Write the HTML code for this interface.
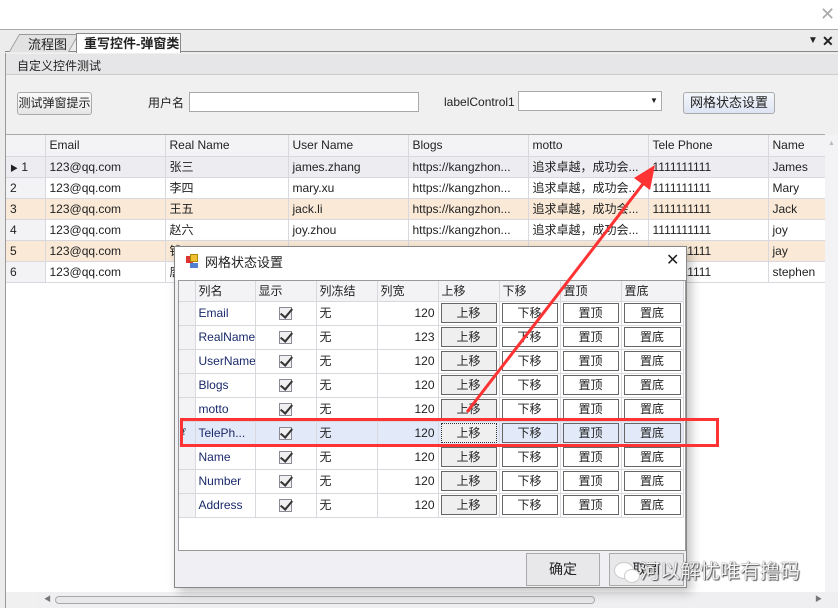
<!DOCTYPE html>
<html><head><meta charset="utf-8"><style>
*{margin:0;padding:0;box-sizing:border-box}
body{width:838px;height:608px;position:relative;overflow:hidden;background:#fff;font-family:"Liberation Sans","Noto Sans CJK SC",sans-serif;font-size:12px;color:#222}
.a{position:absolute}
.t{position:absolute;white-space:nowrap;line-height:1}
.btn{position:absolute;border:1px solid #aaa;border-radius:3px;background:linear-gradient(#fafafa,#e6e6e6);text-align:center;font-size:12px}
.g td{border-right:1px solid #d8d8de;border-bottom:1px solid #d8d8de;height:21px;padding:0 4px;white-space:nowrap;overflow:hidden;font-size:12px;color:#222}
.g{border-collapse:collapse;table-layout:fixed;position:absolute}
.d td{border-right:1px solid #d8d8de;border-bottom:1px solid #d8d8de;height:24px;padding:0 3px;white-space:nowrap;overflow:hidden;font-size:12px;line-height:14px}
.d tr.h td{height:20px;padding-top:0;padding-bottom:0}
.d{border-collapse:collapse;table-layout:fixed;position:absolute}
.cb{display:inline-block;width:13px;height:13px;border:1px solid #8a8a95;background:#f0f0f0;position:relative;vertical-align:middle}
.cb:after{content:"";position:absolute;left:3px;top:-2px;width:5px;height:10px;border:solid #333;border-width:0 2px 2px 0;transform:rotate(40deg)}
.b{display:block;border:1px solid #666;height:20px;line-height:18px;text-align:center;background:#fff;margin:0 -1px}
.b1{background:#efefef}
.sel td{background:#e2eaf9}
.sel .b{background:#e2eaf9}
.sel .b1{background:#efefef;border:1px dotted #333}
</style></head><body>
<div class="t" style="left:820px;top:5px;font-size:18px;color:#aaa">✕</div>
<div class="a" style="left:0;top:29px;width:838px;height:579px;background:#ececec;border-top:1px solid #aaa"></div>
<div class="a" style="left:5px;top:51px;width:833px;height:2px;border-top:1px solid #888"></div>
<div class="a" style="left:14px;top:34px;width:60px;height:18px;background:#e2e2e2;border:1px solid #999;border-bottom:none;transform:skewX(-30deg)"></div>
<div class="t" style="left:28px;top:38px;font-size:13px">流程图</div>
<div class="a" style="left:76px;top:33px;width:105px;height:20px;background:#fff;border:1px solid #888;border-bottom:none"></div>
<div class="t" style="left:84px;top:37px;font-size:13px;font-weight:bold">重写控件-弹窗类</div>
<div class="t" style="left:808px;top:36px;font-size:10px">▼</div>
<div class="t" style="left:822px;top:34px;font-size:14px;font-weight:bold">✕</div>
<div class="a" style="left:5px;top:53px;width:833px;height:555px;background:#f0f0f0;border-left:1px solid #999"></div>
<div class="a" style="left:6px;top:54px;width:832px;height:21px;background:#e6e6e8;border-bottom:1px solid #ccc"></div>
<div class="t" style="left:17px;top:60px;font-size:12px">自定义控件测试</div>
<div class="btn" style="left:17px;top:92px;width:75px;height:23px;line-height:21px">测试弹窗提示</div>
<div class="t" style="left:148px;top:97px">用户名</div>
<div class="a" style="left:189px;top:92px;width:230px;height:20px;background:#fff;border:1px solid #aaa"></div>
<div class="t" style="left:444px;top:96px">labelControl1</div>
<div class="a" style="left:518px;top:91px;width:144px;height:20px;background:#fff;border:1px solid #aaa"></div>
<div class="t" style="left:650px;top:97px;font-size:8px">▼</div>
<div class="btn" style="left:683px;top:92px;width:92px;height:22px;line-height:20px;background:linear-gradient(#f4f6fb,#dde4f3);font-size:13px">网格状态设置</div>
<div class="a" style="left:6px;top:134px;width:819px;height:458px;background:#fff;border-top:1px solid #aaa"></div>
<table class="g" style="left:6px;top:135px;width:830px">
<colgroup><col style="width:39px"><col style="width:120px"><col style="width:123px"><col style="width:120px"><col style="width:120px"><col style="width:120px"><col style="width:120px"><col style="width:68px"></colgroup>
<tr style="background:#f3f3f5"><td></td><td>Email</td><td>Real Name</td><td>User Name</td><td>Blogs</td><td>motto</td><td>Tele Phone</td><td>Name</td></tr>
<tr style="background:#ededf1"><td><span style="font-size:8px">▶</span> 1</td><td>123@qq.com</td><td>张三</td><td>james.zhang</td><td>https://kangzhon...</td><td>追求卓越，成功会...</td><td>1111111111</td><td>James</td></tr>
<tr><td style="background:#f3f3f5">2</td><td>123@qq.com</td><td>李四</td><td>mary.xu</td><td>https://kangzhon...</td><td>追求卓越，成功会...</td><td>1111111111</td><td>Mary</td></tr>
<tr style="background:#f9e9d6"><td>3</td><td>123@qq.com</td><td>王五</td><td>jack.li</td><td>https://kangzhon...</td><td>追求卓越，成功会...</td><td>1111111111</td><td>Jack</td></tr>
<tr><td style="background:#f3f3f5">4</td><td>123@qq.com</td><td>赵六</td><td>joy.zhou</td><td>https://kangzhon...</td><td>追求卓越，成功会...</td><td>1111111111</td><td>joy</td></tr>
<tr style="background:#f9e9d6"><td>5</td><td>123@qq.com</td><td>钱</td><td></td><td></td><td></td><td>1111111111</td><td>jay</td></tr>
<tr><td style="background:#f3f3f5">6</td><td>123@qq.com</td><td>唐</td><td></td><td></td><td></td><td>1111111111</td><td>stephen</td></tr>
</table>
<div class="a" style="left:825px;top:135px;width:13px;height:457px;background:#f3f3f5"></div>
<div class="t" style="left:828px;top:140px;font-size:7px;color:#bbb">▲</div>
<div class="a" style="left:38px;top:592px;width:800px;height:16px;background:#efeff1"></div>
<div class="a" style="left:55px;top:596px;width:540px;height:8px;border:1px solid #aaa;border-radius:4px;background:#e8e8ea"></div>
<div class="t" style="left:44px;top:596px;font-size:7px;color:#777">◀</div>
<div class="t" style="left:815px;top:596px;font-size:7px;color:#777">▶</div>
<div class="a" style="left:174px;top:246px;width:513px;height:342px;background:#f0f0f4;border:1px solid #888;box-shadow:4px 4px 10px rgba(0,0,0,.25)"></div>
<div class="a" style="left:175px;top:247px;width:511px;height:33px;background:#fff"></div>
<div class="a" style="left:186px;top:256px;width:7px;height:7px;background:#d33"></div>
<div class="a" style="left:190px;top:254px;width:8px;height:8px;background:#f0c030;border:1px solid #a80"></div>
<div class="a" style="left:190px;top:263px;width:8px;height:5px;background:#5080d0"></div>
<div class="t" style="left:205px;top:256px;font-size:13px">网格状态设置</div>
<div class="t" style="left:666px;top:253px;font-size:16px">✕</div>
<div class="a" style="left:178px;top:280px;width:508px;height:271px;background:#fff;border:1px solid #999"></div>
<table class="d" style="left:179px;top:281px;width:504px">
<colgroup><col style="width:16px"><col style="width:60px"><col style="width:61px"><col style="width:61px"><col style="width:61px"><col style="width:61px"><col style="width:61px"><col style="width:61px"><col style="width:62px"></colgroup>
<tr class="h" style="background:#f3f3f5"><td></td><td>列名</td><td>显示</td><td>列冻结</td><td>列宽</td><td>上移</td><td>下移</td><td>置顶</td><td>置底</td></tr>
<tr><td style="background:#f3f3f5"></td><td style="color:#1a2a6a">Email</td><td style="text-align:center"><span class="cb"></span></td><td>无</td><td style="text-align:right">120</td><td><span class="b b1">上移</span></td><td><span class="b">下移</span></td><td><span class="b">置顶</span></td><td><span class="b">置底</span></td></tr>
<tr><td style="background:#f3f3f5"></td><td style="color:#1a2a6a">RealName</td><td style="text-align:center"><span class="cb"></span></td><td>无</td><td style="text-align:right">123</td><td><span class="b b1">上移</span></td><td><span class="b">下移</span></td><td><span class="b">置顶</span></td><td><span class="b">置底</span></td></tr>
<tr><td style="background:#f3f3f5"></td><td style="color:#1a2a6a">UserName</td><td style="text-align:center"><span class="cb"></span></td><td>无</td><td style="text-align:right">120</td><td><span class="b b1">上移</span></td><td><span class="b">下移</span></td><td><span class="b">置顶</span></td><td><span class="b">置底</span></td></tr>
<tr><td style="background:#f3f3f5"></td><td style="color:#1a2a6a">Blogs</td><td style="text-align:center"><span class="cb"></span></td><td>无</td><td style="text-align:right">120</td><td><span class="b b1">上移</span></td><td><span class="b">下移</span></td><td><span class="b">置顶</span></td><td><span class="b">置底</span></td></tr>
<tr><td style="background:#f3f3f5"></td><td style="color:#1a2a6a">motto</td><td style="text-align:center"><span class="cb"></span></td><td>无</td><td style="text-align:right">120</td><td><span class="b b1">上移</span></td><td><span class="b">下移</span></td><td><span class="b">置顶</span></td><td><span class="b">置底</span></td></tr>
<tr class="sel"><td style="font-size:10px;font-style:italic">ℓ</td><td style="color:#1a2a6a">TelePh...</td><td style="text-align:center"><span class="cb"></span></td><td>无</td><td style="text-align:right">120</td><td><span class="b b1">上移</span></td><td><span class="b">下移</span></td><td><span class="b">置顶</span></td><td><span class="b">置底</span></td></tr>
<tr><td style="background:#f3f3f5"></td><td style="color:#1a2a6a">Name</td><td style="text-align:center"><span class="cb"></span></td><td>无</td><td style="text-align:right">120</td><td><span class="b b1">上移</span></td><td><span class="b">下移</span></td><td><span class="b">置顶</span></td><td><span class="b">置底</span></td></tr>
<tr><td style="background:#f3f3f5"></td><td style="color:#1a2a6a">Number</td><td style="text-align:center"><span class="cb"></span></td><td>无</td><td style="text-align:right">120</td><td><span class="b b1">上移</span></td><td><span class="b">下移</span></td><td><span class="b">置顶</span></td><td><span class="b">置底</span></td></tr>
<tr><td style="background:#f3f3f5"></td><td style="color:#1a2a6a">Address</td><td style="text-align:center"><span class="cb"></span></td><td>无</td><td style="text-align:right">120</td><td><span class="b b1">上移</span></td><td><span class="b">下移</span></td><td><span class="b">置顶</span></td><td><span class="b">置底</span></td></tr>
</table>
<div class="a" style="left:526px;top:553px;width:74px;height:33px;border:1px solid #aaa;background:#e8e8ea;text-align:center;line-height:31px;font-size:14px">确定</div>
<div class="a" style="left:609px;top:553px;width:75px;height:33px;border:1px solid #aaa;background:#e8e8ea;text-align:center;line-height:31px;font-size:14px">取消</div>
<div class="a" style="left:180px;top:418px;width:539px;height:29px;border:3px solid #f33"></div>
<svg class="a" style="left:0;top:0" width="838" height="608"><line x1="467" y1="412" x2="646" y2="180" stroke="#f33" stroke-width="3"/><polygon points="655,165 634,178 650,190" fill="#f33"/></svg>
<div class="a" style="left:614px;top:562px;width:20px;height:17px;border-radius:50%;background:#fff;border:1px solid #ccc"></div>
<div class="a" style="left:624px;top:569px;width:16px;height:14px;border-radius:50%;background:#fff;border:1px solid #ccc"></div>
<div class="t" style="left:640px;top:562px;font-size:20px;color:#f4f4f4;text-shadow:0 0 1px #333,1px 1px 1px #555">河以解忧唯有撸码</div>
</body></html>
